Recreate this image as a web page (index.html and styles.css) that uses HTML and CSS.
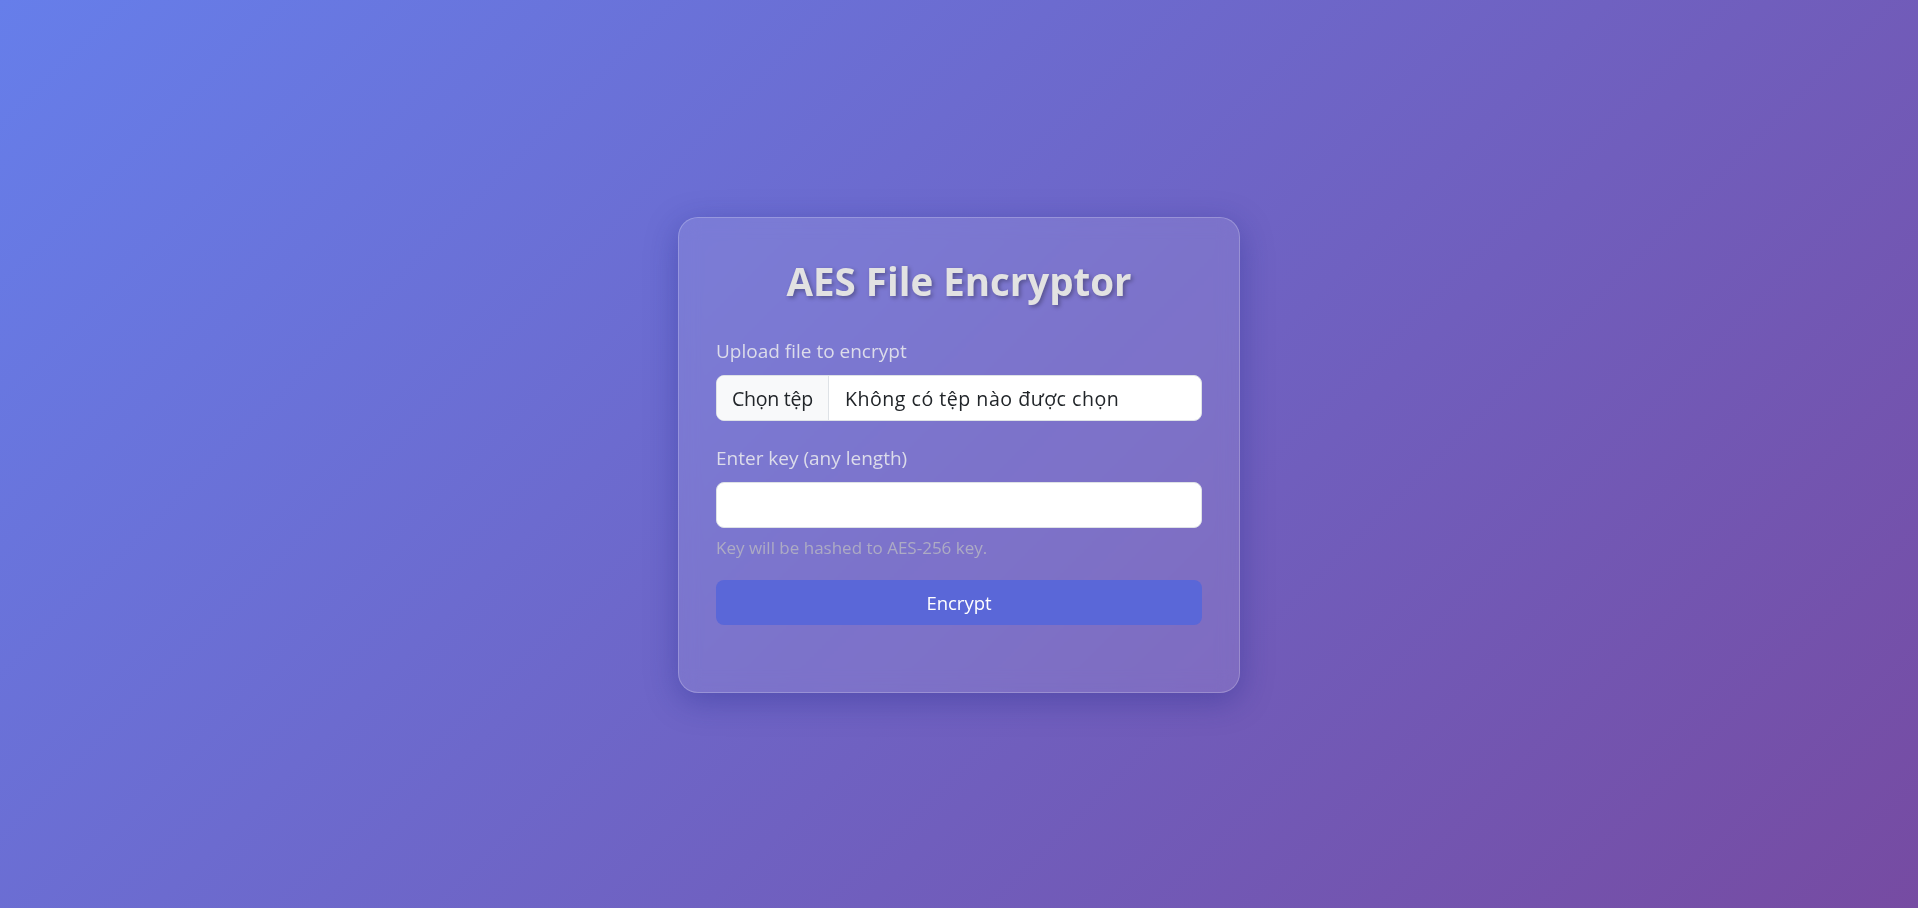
FILE: index.html
```html
<!DOCTYPE html>
<html lang="vi">
<head>
<meta charset="utf-8">
<title>AES File Encryptor</title>
<link rel="stylesheet" href="styles.css">
</head>
<body>
<main class="page">
  <section class="card">
    <h1 class="title">AES File Encryptor</h1>
    <form class="form">
      <div class="group">
        <label class="label">Upload file to encrypt</label>
        <div class="file-input">
          <span class="file-btn">Chọn tệp</span>
          <span class="file-name">Không có tệp nào được chọn</span>
        </div>
      </div>
      <div class="group">
        <label class="label" for="key">Enter key (any length)</label>
        <input class="text-input" id="key" type="password">
        <div class="help">Key will be hashed to AES-256 key.</div>
      </div>
      <button class="btn" type="button">Encrypt</button>
    </form>
  </section>
</main>
</body>
</html>
```
FILE: styles.css
```css
* { box-sizing: border-box; }
html, body { margin: 0; padding: 0; }
body {
  font-family: "Open Sans", "Noto Sans", sans-serif;
  background: linear-gradient(135deg, #667eea 0%, #764ba2 100%);
  min-height: 100vh;
}
.page {
  min-height: 100vh;
  padding-top: 2px;
  display: flex;
  align-items: center;
  justify-content: center;
}
.card {
  width: 562px;
  padding: 37px 37px;
  background: rgba(255, 255, 255, 0.1);
  border: 1px solid rgba(255, 255, 255, 0.22);
  border-radius: 20px;
  box-shadow: 0 8px 32px 0 rgba(31, 38, 135, 0.37);
  backdrop-filter: blur(10px);
}
.title {
  margin: 0 0 31px;
  font-size: 38.5px;
  line-height: 52px;
  font-weight: 700;
  text-align: center;
  color: #e2e2e2;
  text-shadow: 2px 2px 4px rgba(0, 0, 0, 0.3);
}
.form {
  margin: 0 0 30px;
  display: flex;
  flex-direction: column;
}
.group { margin-bottom: 24px; display: flex; flex-direction: column; }
.group:last-of-type { margin-bottom: 20px; }
.label {
  display: block;
  font-size: 19px;
  line-height: 26px;
  margin-bottom: 11px;
  color: #dcdcea;
}
.file-input {
  display: flex;
  height: 46px;
  background: #fff;
  border: 1px solid #dee2e6;
  border-radius: 8px;
  overflow: hidden;
  font-size: 19.6px;
  color: #212529;
}
.file-btn {
  display: flex;
  align-items: center;
  padding: 0 14px 0 15px;
  width: 112px;
  background: #f8f9fa;
  border-right: 1px solid #dee2e6;
  letter-spacing: -0.3px;
  white-space: nowrap;
}
.file-name {
  display: flex;
  align-items: center;
  padding: 0 16px;
  letter-spacing: 0.5px;
}
.text-input {
  height: 46px;
  width: 100%;
  border: 1px solid #dee2e6;
  border-radius: 8px;
  background: #fff;
  font-size: 19px;
  padding: 0 16px;
}
.help {
  margin-top: 7px;
  font-size: 17px;
  line-height: 25px;
  color: #adabc4;
}
.btn {
  height: 45px;
  width: 100%;
  border: 0;
  border-radius: 8px;
  background: #5a67d8;
  color: #fff;
  font-family: "Open Sans", "Noto Sans", sans-serif;
  font-size: 18.5px;
  font-weight: 500;
}
```
